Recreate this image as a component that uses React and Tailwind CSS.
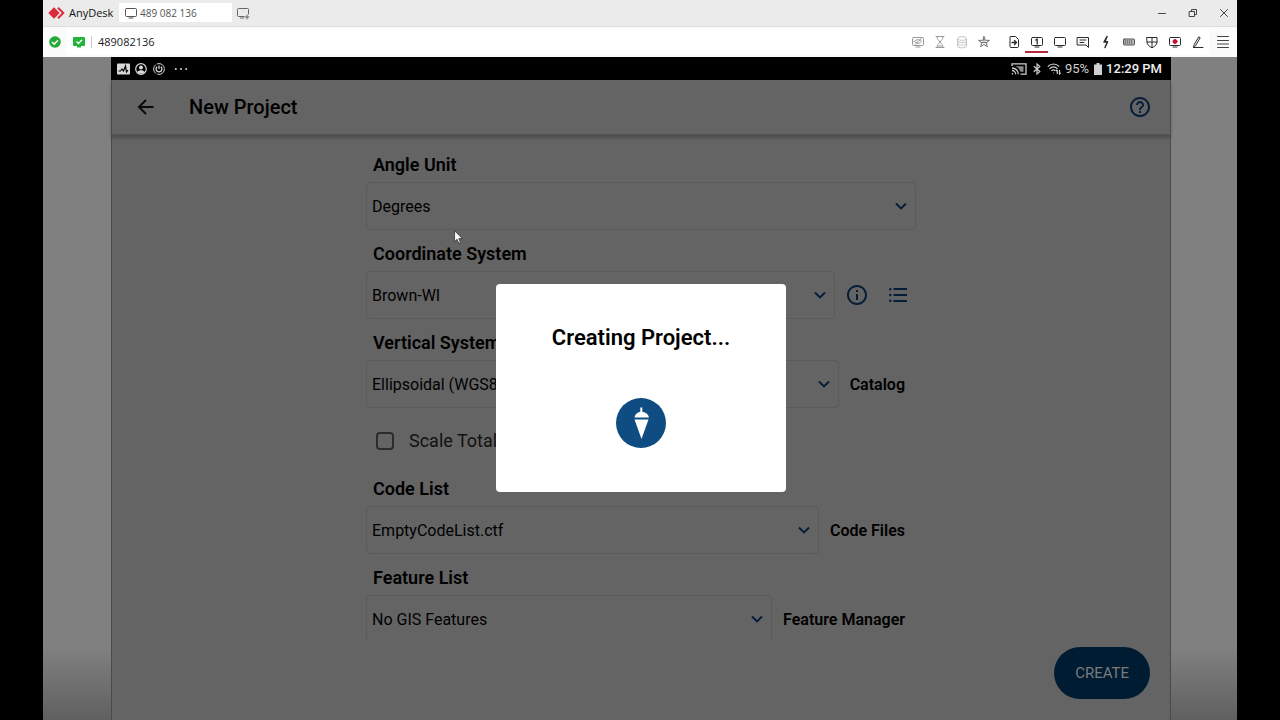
import React from "react";

function Icon({ children, className = "", size = 14, viewBox = "0 0 14 14", stroke = 1 }) {
  return (
    <svg
      aria-hidden="true"
      width={size}
      height={size}
      viewBox={viewBox}
      className={className}
      fill="none"
      stroke="currentColor"
      strokeWidth={stroke}
      strokeLinecap="round"
      strokeLinejoin="round"
    >
      {children}
    </svg>
  );
}

function Screen() {
  return (
    <>
      <rect x="1.5" y="2.5" width="11" height="8" rx="1" />
      <path d="M5 12h4" />
    </>
  );
}

const fadedTools = [
  {
    label: "Privacy mode",
    art: (
      <>
        <Screen />
        <path d="M3.5 6.5c2-2.5 5-2.5 7 0c-2 2.5-5 2.5-7 0zM4 9.5l6.5-6" />
      </>
    ),
  },
  {
    label: "Session time",
    art: <path d="M3 1.5h8M3 12.5h8M4 1.5c0 3 1.500 3.500 3 5.500c1.500-2 3-2.500 3-5.500M4 12.500c0-3 1.500-3.500 3-5.500c1.500 2 3 2.500 3 5.500M5.500 11h3" />,
  },
  {
    label: "Layers",
    faint: true,
    art: (
      <>
        <ellipse cx="7" cy="3.500" rx="4.500" ry="1.800" />
        <path d="M2.500 3.500v7.500c0 2.400 9 2.400 9 0V3.500M2.500 6c0 2.400 9 2.400 9 0M2.500 8.500c0 2.400 9 2.400 9 0" />
      </>
    ),
  },
];

const tools = [
  {
    label: "File transfer",
    art: (
      <>
        <path d="M4 1.500h4.500l3 3v7a1 1 0 0 1-1 1H4a1 1 0 0 1-1-1v-9a1 1 0 0 1 1-1z" />
        <path d="M5 7.500h4.500M7.500 5.500l2 2l-2 2" strokeWidth="1.300" />
      </>
    ),
  },
  {
    label: "Monitor 1",
    active: true,
    art: (
      <>
        <Screen />
        <path d="M5.800 5l1.400-1v5" strokeWidth="1.300" />
      </>
    ),
  },
  { label: "Display", art: <Screen /> },
  {
    label: "Chat",
    art: (
      <>
        <path d="M1.500 2.500h11v10l-2.500-2.500H1.500z" />
        <path d="M4 5h6M4 7.500h4" />
      </>
    ),
  },
  { label: "Actions", art: <path d="M8 1.500L5 7l3.500-.3L6 12.500M8 1.500L6.200 6" strokeWidth="1.500" /> },
  {
    label: "Keyboard",
    art: (
      <>
        <rect x="1.500" y="4" width="11" height="6" rx=".8" fill="#bbb" stroke="#555" />
        <path d="M3 6h8M3 8h8" stroke="#444" strokeDasharray=".6 1.500" />
      </>
    ),
  },
  {
    label: "Permissions",
    art: <path d="M2 2.500h10v4.500c0 3-2.500 4.500-5 5.800c-2.500-1.300-5-2.800-5-5.800zM7 2.500v10M2 7h10" />,
  },
  {
    label: "Record",
    art: (
      <>
        <Screen />
        <circle cx="7" cy="6.500" r="2" fill="#c8102e" stroke="#c8102e" />
      </>
    ),
  },
  { label: "Whiteboard", art: <path d="M2.500 12.300l.8-3L7.800 1.800l1.400 1l-4.700 8zM3 12.500h9" /> },
];

function Chevron() {
  return (
    <svg aria-hidden="true" viewBox="0 0 12 8" fill="none" className="pointer-events-none absolute right-[9px] top-1/2 h-2 w-3 -translate-y-1/2">
      <path d="M1 1.500l5 5l5-5" stroke="#051d38" strokeWidth="1.900" />
    </svg>
  );
}

function Field({ id, label, value, children }) {
  return (
    <div>
      <div className="flex h-[41px] items-end px-[7px] pb-[5px]">
        <label htmlFor={id} className="text-[18px] leading-6 font-semibold">
          {label}
        </label>
      </div>
      <div className="flex items-center">
        <div className="relative min-w-0 flex-1">
          <select
            id={id}
            className="block h-12 w-full appearance-none rounded-sm border border-[#5a5a5a] bg-transparent px-[5px] pt-[2px] text-[16px] leading-6 outline-none"
          >
            <option>{value}</option>
          </select>
          <Chevron />
        </div>
        {children}
      </div>
    </div>
  );
}

function SideLink({ children }) {
  return (
    <button type="button" className="shrink-0 px-[11px] pt-[2px] text-[16px] leading-6 font-semibold">
      {children}
    </button>
  );
}

function TitleBar() {
  return (
    <header className="flex h-[27px] shrink-0 items-center border-b border-[#dedede] bg-[#ebebeb] pb-px text-[#333]">
      <div className="flex w-[76px] shrink-0 items-center gap-1 pl-[5px]">
        <svg aria-hidden="true" viewBox="0 0 17 12" className="h-3 w-[17px] shrink-0">
          <path d="M6 .3L11.700 6L6 11.700L.3 6z" fill="#dc2b3c" />
          <path d="M9.300 1.400L10.700 0L16.700 6l-6 6l-1.400-1.400L13.900 6z" fill="#dc2b3c" />
        </svg>
        <span className="text-[11px] leading-4 font-medium text-[#111]">AnyDesk</span>
      </div>
      <button type="button" className="flex h-[19px] w-[113px] items-center gap-[2px] bg-white pl-[5px] text-[10px] leading-4 text-[#555]">
        <Icon><Screen /></Icon>
        489 082 136
      </button>
      <button type="button" aria-label="New session" className="ml-1">
        <Icon className="text-[#666]">
          <path d="M8 10.500H2.500a1 1 0 0 1-1-1V3.500a1 1 0 0 1 1-1h9a1 1 0 0 1 1 1V8M4.500 12h3M11 9v4M9 11h4" />
        </Icon>
      </button>
      <div className="ml-auto flex items-center gap-[17px] pr-[6px] text-[#444]">
        <button type="button" aria-label="Minimize"><Icon><path d="M3.500 7.500h7" /></Icon></button>
        <button type="button" aria-label="Restore">
          <Icon><path d="M3.500 5.500h5v5h-5zM5.500 5.500v-2h5v5h-2" /></Icon>
        </button>
        <button type="button" aria-label="Close"><Icon><path d="M3.500 3.500l7 7M10.500 3.500l-7 7" /></Icon></button>
      </div>
    </header>
  );
}

function ToolBar() {
  return (
    <div className="flex h-[30px] shrink-0 items-center bg-[#fafafa] pb-px">
      <span className="flex w-[23px] shrink-0 justify-center">
        <svg role="img" aria-label="Connected" viewBox="0 0 12 12" className="h-3 w-3">
          <circle cx="6" cy="6" r="5.800" fill="#23a936" />
          <path d="M3 6l2.200 2.200L9 4.300" stroke="#fff" strokeWidth="1.600" fill="none" />
        </svg>
      </span>
      <div className="flex h-[27px] min-w-0 flex-1 items-center bg-white pl-[7px]">
        <svg aria-hidden="true" viewBox="0 0 12 12" className="h-3 w-3 shrink-0">
          <path d="M1 1h10a1 1 0 0 1 1 1v7a1 1 0 0 1-1 1H8v1.500H4V10H1a1 1 0 0 1-1-1V2a1 1 0 0 1 1-1z" fill="#25b33c" />
          <path d="M3.500 5.500l2 2l3.500-3.700" stroke="#fff" strokeWidth="1.300" fill="none" />
        </svg>
        <span className="ml-[6px] h-3 w-px bg-[#ccc]" />
        <input
          aria-label="Remote address"
          defaultValue="489082136"
          className="ml-[6px] min-w-0 flex-1 bg-transparent text-[11px] leading-4 text-[#222] outline-none"
        />
        <div className="flex shrink-0 text-[#999]">
          {fadedTools.map((t) => (
            <button
              key={t.label}
              type="button"
              aria-label={t.label}
              className={t.faint ? "flex w-[22px] justify-center text-[#c4c4c4]" : "flex w-[22px] justify-center"}
            >
              <Icon>{t.art}</Icon>
            </button>
          ))}
          <button type="button" aria-label="Favourite" className="flex w-[22px] justify-center text-[#555]">
            <Icon>
              <path d="M7 1.500l1.400 3.800l4.100.1l-3.300 2.400l1.200 4L7 9.500l-3.400 2.300l1.200-4L1.500 5.400l4.100-.1zM7 4v3.500l-3 .2M7 7.500l3 .2" strokeWidth=".8" />
            </Icon>
          </button>
        </div>
        <div className="ml-[7px] flex shrink-0 text-[#2b2b2b]">
          {tools.map((t) => (
            <button
              key={t.label}
              type="button"
              aria-label={t.label}
              className={
                t.active
                  ? "flex h-[22px] w-[23px] items-center justify-center border-y-2 border-t-transparent border-b-[#b3283a]"
                  : "flex h-[22px] w-[23px] items-center justify-center"
              }
            >
              <Icon>{t.art}</Icon>
            </button>
          ))}
        </div>
      </div>
      <button type="button" aria-label="Menu" className="flex w-7 shrink-0 justify-center text-[#444]">
        <Icon><path d="M1.500 1.500h11M1.500 5.500h11M1.500 9h11M1.500 12.500h11" strokeWidth="1" /></Icon>
      </button>
    </div>
  );
}

function StatusBar() {
  return (
    <div className="flex h-[23px] shrink-0 items-center bg-black px-[6px] text-[#d0d0d0]">
      <div className="flex items-center gap-[5px]">
        <svg aria-hidden="true" viewBox="0 0 13 12" className="h-3 w-[13px]">
          <rect y=".5" width="13" height="11" rx="1" fill="#d8d8d8" />
          <path d="M1.500 8h2l1.500-2l1.500 2l2-5l1 6l1.500-2" stroke="#000" strokeWidth="1.200" fill="none" />
        </svg>
        <svg aria-hidden="true" viewBox="0 0 12 12" className="h-3 w-3">
          <circle cx="6" cy="6" r="5.300" stroke="#d8d8d8" strokeWidth="1.200" fill="none" />
          <circle cx="6" cy="4.500" r="2" fill="#d8d8d8" />
          <path d="M2.300 9c1.500-2.500 5.900-2.500 7.400 0c-1.500 2.300-5.900 2.300-7.400 0z" fill="#d8d8d8" />
        </svg>
        <svg aria-hidden="true" viewBox="0 0 12 12" className="ml-px h-3 w-3" fill="none" stroke="#d8d8d8">
          <circle cx="6" cy="6" r="5.400" strokeDasharray="10 1.300" />
          <path d="M4.200 3.800a2.900 2.900 0 1 0 3.600 0M6 2.500v3.500" strokeWidth="1.300" />
        </svg>
        <svg aria-hidden="true" viewBox="0 0 14 4" className="ml-1 h-1 w-[14px]" fill="#d8d8d8">
          <circle cx="1.800" cy="2" r="1" />
          <circle cx="7" cy="2" r="1" />
          <circle cx="12.200" cy="2" r="1" />
        </svg>
      </div>
      <div className="ml-auto flex items-center pr-[3px] text-[13px] leading-5">
        <svg aria-hidden="true" viewBox="0 0 16 12" className="h-3 w-4" fill="none" stroke="#d0d0d0" strokeWidth="1.300">
          <path d="M1 3V.8h14v10.400H9.500M1 5c3.500 0 6.300 2.700 6.300 6.200M1 7.500c2 0 3.700 1.700 3.700 3.700M1 10.200l1 1" />
          <path d="M4 3.200h8.500v5.500H9.500C8.500 6 6.500 4 4 3.200z" fill="#8b8b8b" stroke="none" />
        </svg>
        <svg aria-hidden="true" viewBox="0 0 8 12" className="ml-[6px] h-3 w-2" fill="none" stroke="#d0d0d0" strokeWidth="1.200">
          <path d="M.8 3.300l6 5.300L4 11V1l2.800 2.400l-6 5.300" />
        </svg>
        <svg aria-hidden="true" viewBox="0 0 14 12" className="ml-[6px] h-3 w-[14px]" fill="none" stroke="#d0d0d0" strokeWidth="1.200">
          <path d="M.8 3.500c3.500-3.200 8-3.200 11.400 0M2.500 5.700c2.500-2.300 5.500-2.300 8 0M4.300 7.900c1.500-1.300 2.900-1.300 4.200 0M6.300 10h.8M10.300 11V7M9 8l1.300-1.200M12.500 7v4l1.200-1.200" />
        </svg>
        <span className="ml-1">95%</span>
        <svg aria-hidden="true" viewBox="0 0 8 12" className="ml-[5px] h-3 w-2" fill="#d0d0d0">
          <path d="M2.500 0h3v1.500H8V12H0V1.500h2.500z" />
        </svg>
        <span className="ml-1 font-medium text-[#eee]">12:29 PM</span>
      </div>
    </div>
  );
}

export default function App() {
  return (
    <div className="h-screen bg-black px-[43px] font-['Open_Sans',sans-serif]">
      <div className="flex h-full flex-col">
        <TitleBar />
        <ToolBar />
        <main className="flex min-h-0 flex-1 bg-[linear-gradient(to_bottom,#808080_calc(100%-72px),#606060)] pr-[66px] pl-[68px] font-[Roboto,sans-serif] text-black">
          <div className="relative flex min-w-0 flex-1 flex-col bg-[#646464]">
            <StatusBar />
            <div className="z-10 flex h-[55px] shrink-0 items-center border-x border-b border-x-[#4a4a4a] border-b-[#555] bg-[#646464] px-5 shadow-[0_3px_3px_0_rgba(0,0,0,0.22)]">
              <button type="button" aria-label="Back" className="ml-[5px]">
                <svg aria-hidden="true" viewBox="0 0 18 16" className="h-4 w-[18px]" fill="none" stroke="#0a0a0a" strokeWidth="2">
                  <path d="M16.500 8H2.500M9 1L2 8l7 7" />
                </svg>
              </button>
              <h1 className="ml-[34px] text-[20px] leading-6 font-medium">New Project</h1>
              <button type="button" aria-label="Help" className="ml-auto">
                <svg aria-hidden="true" viewBox="2 2 20 20" className="h-5 w-5" fill="#051d38">
                  <path d="M11 18h2v-2h-2v2zm1-16C6.480 2 2 6.480 2 12s4.480 10 10 10 10-4.480 10-10S17.520 2 12 2zm0 18c-4.410 0-8-3.590-8-8s3.590-8 8-8 8 3.590 8 8-3.590 8-8 8zm0-14c-2.210 0-4 1.790-4 4h2c0-1.100.9-2 2-2s2 .9 2 2c0 2-3 1.750-3 5h2c0-2.250 3-2.500 3-5 0-2.210-1.790-4-4-4z" />
                </svg>
              </button>
            </div>
            <div className="flex min-h-0 flex-1 flex-col border-x border-[#4a4a4a]">
              <form className="mx-auto mt-[6px] min-h-0 w-full max-w-[550px] flex-1 overflow-hidden">
                <Field id="angle" label="Angle Unit" value="Degrees" />
                <Field id="coordinate" label="Coordinate System" value="Brown-WI">
                  <div className="flex items-center gap-[22px] pr-[9px] pl-3">
                    <button type="button" aria-label="Information">
                      <svg aria-hidden="true" viewBox="2 2 20 20" className="h-5 w-5" fill="#051d38">
                        <path d="M11 7h2v2h-2zm0 4h2v6h-2zm1-9C6.480 2 2 6.480 2 12s4.480 10 10 10 10-4.480 10-10S17.520 2 12 2zm0 18c-4.410 0-8-3.590-8-8s3.590-8 8-8 8 3.590 8 8-3.590 8-8 8z" />
                      </svg>
                    </button>
                    <button type="button" aria-label="System list">
                      <svg aria-hidden="true" viewBox="0 0 18 14" className="h-[14px] w-[18px]" fill="#051d38">
                        <path d="M4.500 0H18v2H4.500zM4.500 6H18v2H4.500zM4.500 12H18v2H4.500z" />
                        <circle cx="1.300" cy="1.200" r="1.200" />
                        <circle cx="1.300" cy="7" r="1.200" />
                        <circle cx="1.300" cy="12.800" r="1.200" />
                      </svg>
                    </button>
                  </div>
                </Field>
                <Field id="vertical" label="Vertical System" value="Ellipsoidal (WGS84)">
                  <SideLink>Catalog</SideLink>
                </Field>
                <div className="flex h-[57px] items-center pt-[9px] pl-[10px]">
                  <input id="scale" type="checkbox" className="h-[18px] w-[18px] appearance-none rounded-sm border-2 border-[#2c2c2c]" />
                  <label htmlFor="scale" className="pl-[15px] text-[18px] leading-6 text-[#111]">Scale Total</label>
                </div>
                <Field id="code" label="Code List" value="EmptyCodeList.ctf">
                  <SideLink>Code Files</SideLink>
                </Field>
                <Field id="feature" label="Feature List" value="No GIS Features">
                  <SideLink>Feature Manager</SideLink>
                </Field>
              </form>
              <footer className="flex h-20 shrink-0 items-start justify-end pt-[7px] pr-5">
                <button type="button" className="h-[52px] rounded-full bg-[#001c33] px-[21px] text-[15px] leading-6 text-[#7a7a7a]">
                  CREATE
                </button>
              </footer>
            </div>
            <div className="absolute inset-0 z-20 flex items-center justify-center pb-[2px]">
              <div role="dialog" aria-labelledby="progress" className="flex h-[208px] w-[290px] flex-col items-center rounded-sm bg-white pt-10">
                <h2 id="progress" className="text-[22px] leading-7 font-semibold">Creating Project...</h2>
                <svg role="img" aria-label="Loading" viewBox="0 0 50 50" className="mt-[46px] h-[50px] w-[50px]">
                  <circle cx="25" cy="25" r="25" fill="#0f4c81" />
                  <path d="M24.300 9.500h2v4.300c3.800.6 6.200 3 6.700 5.700H18.500c.5-2.700 2.500-5.100 5.800-5.700zM18.500 21.500h14L25.500 41z" fill="#fff" />
                </svg>
              </div>
            </div>
            <svg aria-hidden="true" viewBox="0 0 10 14" className="absolute top-[173px] left-[343px] z-30 h-[14px] w-[10px]">
              <path d="M.6 .8v10.800l2.500-2.300l1.700 4l1.700-.7l-1.700-4h3.500z" fill="#fff" stroke="#222" strokeWidth=".7" />
            </svg>
          </div>
        </main>
      </div>
    </div>
  );
}
